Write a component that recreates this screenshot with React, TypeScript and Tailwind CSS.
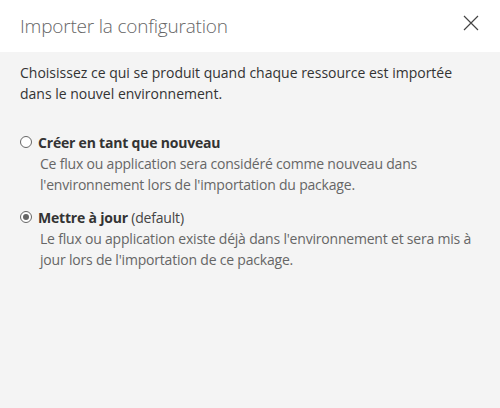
import { useState } from 'react';

type Mode = 'new' | 'update';

const options: { id: Mode; label: string; hint?: string; desc: string }[] = [
  {
    id: 'new',
    label: 'Créer en tant que nouveau',
    desc: "Ce flux ou application sera considéré comme nouveau dans l'environnement lors de l'importation du package.",
  },
  {
    id: 'update',
    label: 'Mettre à jour',
    hint: '(default)',
    desc: "Le flux ou application existe déjà dans l'environnement et sera mis à jour lors de l'importation de ce package.",
  },
];

function Radio({ checked }: { checked: boolean }) {
  return (
    <span className="mt-[4px] flex h-[12px] w-[12px] shrink-0 items-center justify-center rounded-full border border-[#666] bg-white">
      {checked && <span className="h-[6px] w-[6px] rounded-full bg-[#666]" />}
    </span>
  );
}

export default function App() {
  const [mode, setMode] = useState<Mode>('update');

  return (
    <div className="flex h-[408px] w-[500px] flex-col bg-[#f4f4f4] font-['Open_Sans',sans-serif]">
      {/* Header */}
      <div className="flex h-[52px] items-start justify-between bg-white pl-5 pr-[21px]">
        <h1 className="mt-[12px] text-[19px] font-light tracking-[-0.2px] text-[#666]">Importer la configuration</h1>
        <button className="mt-[15px] text-[#444]" aria-label="Fermer">
          <svg width="16" height="16" viewBox="0 0 16 16" fill="none" stroke="currentColor" strokeWidth="1.2">
            <path d="M1 1L15 15M15 1L1 15" />
          </svg>
        </button>
      </div>

      {/* Body */}
      <div className="px-5 pt-[10px] text-[14px] leading-[21px]">
        <p className="text-[#333]">
          Choisissez ce qui se produit quand chaque ressource est importée dans le nouvel environnement.
        </p>

        <div className="mt-[28px] flex flex-col gap-[12px] tracking-[-0.2px]">
          {options.map((o) => (
            <label key={o.id} className="flex cursor-pointer gap-[6px]" onClick={() => setMode(o.id)}>
              <Radio checked={mode === o.id} />
              <span>
                <span className="font-bold text-[#333]">{o.label}</span>
                {o.hint && <span className="text-[#444]"> {o.hint}</span>}
                <span className="block pl-[2px] text-[#666]">{o.desc}</span>
              </span>
            </label>
          ))}
        </div>
      </div>
    </div>
  );
}
